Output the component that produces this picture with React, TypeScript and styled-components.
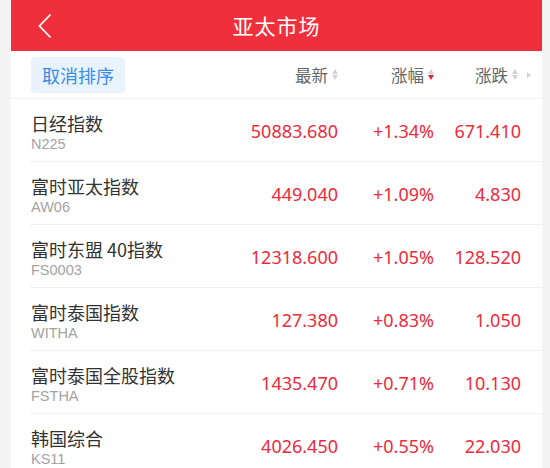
import React from "react";
import styled, { createGlobalStyle } from "styled-components";

const GlobalStyle = createGlobalStyle`
    body {
        margin: 0;
        background: #f4f4f4;
        font-family: "Noto Sans CJK SC", "Noto Sans", Roboto, sans-serif;
    }
`

interface Quote {
    name: string;
    code: string;
    price: string;
    rate: string;
    change: string;
}

const quotes: Quote[] = [
    { name: "日经指数", code: "N225", price: "50883.680", rate: "+1.34%", change: "671.410" },
    { name: "富时亚太指数", code: "AW06", price: "449.040", rate: "+1.09%", change: "4.830" },
    { name: "富时东盟 40指数", code: "FS0003", price: "12318.600", rate: "+1.05%", change: "128.520" },
    { name: "富时泰国指数", code: "WITHA", price: "127.380", rate: "+0.83%", change: "1.050" },
    { name: "富时泰国全股指数", code: "FSTHA", price: "1435.470", rate: "+0.71%", change: "10.130" },
    { name: "韩国综合", code: "KS11", price: "4026.450", rate: "+0.55%", change: "22.030" },
];

const Page = styled.div`
    width: 531px;
    margin-left: 11px;
    min-height: 468px;
    background: #ffffff;
`

const TitleBar = styled.header`
    height: 51px;
    background: #ef2f3c;
    display: flex;
    align-items: center;
    justify-content: center;
    position: relative;
`

const BackButton = styled.button`
    position: absolute;
    left: 24px;
    top: 12px;
    width: 20px;
    height: 28px;
    padding: 0;
    border: none;
    background: none;
    display: flex;
    align-items: center;
    justify-content: center;
`

const Title = styled.h1`
    margin: 0;
    color: #ffffff;
    font-size: 21px;
    font-weight: 400;
    letter-spacing: 1px;
    line-height: 1;
`

const Grid = styled.div`
    display: grid;
    grid-template-columns: 1fr 130px 96px 87px;
    padding-right: 21px;
`

const HeadRow = styled(Grid)`
    height: 47px;
    align-items: center;
    padding-left: 20px;
    border-bottom: 1px solid #f3f3f3;
`

const ResetButton = styled.button`
    justify-self: start;
    height: 36px;
    padding: 0 11px;
    border: none;
    border-radius: 4px;
    background: #e9f3fd;
    color: #3b8de4;
    font-family: inherit;
    font-size: 18px;
    line-height: 36px;
`

const HeadCell = styled.div<{ $overflow?: boolean }>`
    display: flex;
    align-items: center;
    justify-content: flex-end;
    color: #666666;
    font-size: 16.5px;
    margin-right: ${p => (p.$overflow ? "-10px" : "0")};
`

const SortIcon = styled.span`
    display: inline-flex;
    flex-direction: column;
    gap: 1px;
    margin-left: 4px;
`

const Tri = styled.span<{ $down?: boolean; $active?: boolean }>`
    width: 0;
    height: 0;
    border-left: 3.5px solid transparent;
    border-right: 3.5px solid transparent;
    ${p => (p.$down
        ? `border-top: 5px solid ${p.$active ? "#e8252f" : "#d2d2d2"};`
        : `border-bottom: 5px solid #d2d2d2;`)}
`

const MoreTri = styled.span`
    width: 0;
    height: 0;
    margin-left: 9px;
    border-top: 3.5px solid transparent;
    border-bottom: 3.5px solid transparent;
    border-left: 4px solid #d2d2d2;
`

const Row = styled(Grid)`
    height: 62px;
    margin-left: 19px;
    border-bottom: 1px solid #f0f0f0;
`

const NameBox = styled.div`
    padding: 11px 0 0 1px;
    display: flex;
    flex-direction: column;
`

const Name = styled.div`
    color: #333333;
    font-size: 18px;
    line-height: 26px;
    white-space: nowrap;
`

const Code = styled.div`
    color: #a3a3a3;
    font-family: "Liberation Sans", Arial, sans-serif;
    font-size: 14.5px;
    line-height: 17px;
`

const Num = styled.div`
    align-self: center;
    padding-top: 2px;
    text-align: right;
    color: #ee2a3c;
    font-family: "Noto Sans", Roboto, sans-serif;
    font-size: 18px;
`

const Sort = ({ active }: { active?: boolean }) => (
    <SortIcon>
        <Tri />
        <Tri $down $active={active} />
    </SortIcon>
)

const App = (): JSX.Element => {
    return (
        <Page>
            <GlobalStyle />
            <TitleBar>
                <BackButton>
                    <svg width="14" height="26" viewBox="0 0 14 26">
                        <path d="M12.5 1.5 L1.5 13 L12.5 24.5" fill="none" stroke="#fff" strokeWidth="1.8" />
                    </svg>
                </BackButton>
                <Title>亚太市场</Title>
            </TitleBar>
            <HeadRow>
                <ResetButton>取消排序</ResetButton>
                <HeadCell>最新<Sort /></HeadCell>
                <HeadCell>涨幅<Sort active /></HeadCell>
                <HeadCell $overflow>涨跌<Sort /><MoreTri /></HeadCell>
            </HeadRow>
            {quotes.map(q => (
                <Row key={q.code}>
                    <NameBox>
                        <Name>{q.name}</Name>
                        <Code>{q.code}</Code>
                    </NameBox>
                    <Num>{q.price}</Num>
                    <Num>{q.rate}</Num>
                    <Num>{q.change}</Num>
                </Row>
            ))}
        </Page>
    )
};

export default App;
